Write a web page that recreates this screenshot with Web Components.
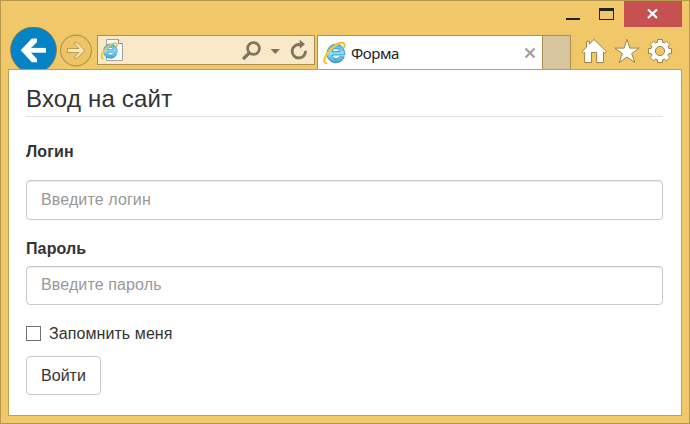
<!DOCTYPE html>
<html lang="ru">
<head>
<meta charset="utf-8">
<title>Форма</title>
<style>
body { margin: 0; font-family: "Liberation Sans", Arial, sans-serif; color: #333; }
</style>
</head>
<body>
<browser-window>
  <title-bar slot="title"></title-bar>
  <tool-bar slot="tools">
    <address-bar slot="address"></address-bar>
    <browser-tab slot="tab">Форма</browser-tab>
  </tool-bar>
  <login-form>
    <span slot="heading">Вход на сайт</span>
    <text-field class="login" hint="Введите логин">Логин</text-field>
    <text-field class="password" hint="Введите пароль">Пароль</text-field>
    <check-field>Запомнить меня</check-field>
    <form-button>Войти</form-button>
  </login-form>
</browser-window>

<script>
const define = (name, html) => {
  const template = document.createElement('template');
  template.innerHTML = html;
  customElements.define(name, class extends HTMLElement {
    constructor() {
      super();
      this.attachShadow({ mode: 'open' }).append(template.content.cloneNode(true));
    }
    connectedCallback() {
      const hint = this.shadowRoot.querySelector('[data-hint]');
      if (hint) hint.textContent = this.getAttribute('hint');
    }
  });
};

const eLogo = `
  <defs><linearGradient id="g" x1="0" y1="0" x2="0" y2="1"><stop offset="0" stop-color="#4fb0e2"/><stop offset=".5" stop-color="#86e0fb"/><stop offset="1" stop-color="#3aa5de"/></linearGradient></defs>
  <path d="M21.300 15.800C19.900 19.400 16.800 21.700 13 21.700C7.700 21.700 4 17.800 4 12.700C4 7.300 7.900 3.300 13 3.300C18.500 3.300 21.900 7.400 21.700 14H9.300C9.600 18.200 14.900 18.700 16.300 15.800ZM9.400 10.600H16.500C16.100 6.600 9.900 6.600 9.400 10.600Z" fill="url(#g)" stroke="#2584bd" stroke-width=".8" fill-rule="evenodd"/>
  <path d="M3.300 22.300C-1.700 21.700 3.500 10.500 11.500 4.900C17.500 .8 23 .4 21.200 6.300" fill="none" stroke="#f8bd22" stroke-width="2" stroke-linecap="round"/>
  <path d="M2.600 18.500C3.800 13 9 7 15 3.400" fill="none" stroke="#ffe27c" stroke-width=".6"/>`;

define('browser-window', `
<style>
:host { display: flex; flex-direction: column; box-sizing: border-box; width: 690px; height: 424px; border: 1px solid #b5984e; background: #f0c869; }
main { flex: 1; margin: 0 7px 7px; border: 1px solid #bd9f52; background: #fff; box-sizing: border-box; }
</style>
<slot name="title"></slot><slot name="tools"></slot><main><slot></slot></main>`);

define('title-bar', `
<style>
:host { display: flex; justify-content: flex-end; height: 26px; padding-right: 7px; }
svg { display: block; }
</style>
<svg width="117" height="26" viewBox="565 1 117 26" shape-rendering="crispEdges">
  <path d="M566 18h14v2h-14z" fill="#222"/>
  <path d="M599 8h15v12h-15zM600 11v8h13v-8z" fill="#222" fill-rule="evenodd"/>
  <path d="M624 1h58v26h-58z" fill="#c75050"/>
  <path d="M648 9.500l9 8.500M657 9.500l-9 8.500" stroke="#fff" stroke-width="2.300" shape-rendering="auto"/>
</svg>`);

define('tool-bar', `
<style>
:host { display: flex; height: 42px; padding-left: 8px; }
svg { display: block; flex: none; }
.forward { margin-right: 5px; }
.new { box-sizing: border-box; width: 28px; height: 34px; margin-top: 8px; border: solid #ad914b; border-width: 1px 1px 0 0; background: #d7c69d; }
.icons { margin-left: 8px; }
</style>
<svg width="50" height="42" viewBox="9 27 50 42">
  <circle cx="33.500" cy="50" r="22.900" fill="#0483c7" stroke="#806f3f"  stroke-width=".8"/>
  <path d="M46 50.300H25" stroke="#fff" stroke-width="4.800" fill="none"/>
  <path d="M31.800 38.500H37V42L28.800 50.300L37 58.900V62.300H31.800L20.700 50.300Z" fill="#fff"/>
</svg>
<svg class="forward" width="33" height="42" viewBox="59 27 33 42">
  <circle cx="76" cy="50.500" r="15.400" fill="#edc466" stroke="#b1944c" stroke-width="1.100"/>
  <path d="M67.500 48.500H79L74.300 43.600V42.800H77.300L84.800 50.500L77.300 58.200H74.300V57.300L79 52.500H67.500Z" fill="#fae6b8" stroke="#af944f" stroke-width=".9"/>
</svg>
<slot name="address"></slot>
<slot name="tab"></slot>
<div class="new"></div>
<svg class="icons" width="96" height="42" viewBox="579 27 96 42">
  <g fill="#fff" stroke="#9d8343" stroke-width="1" stroke-linejoin="round">
    <path d="M582 51.800L586.500 47V41.400H589.300V44.200L593.900 39.300L606.500 51.800L604.700 53.200L603.500 52.200V62.500H596.700V52.500H591.500V62.500H584.700V52.200L583.500 53.200Z"/>
    <path d="M627 39.200L629.800 48.100H639.200L631.700 53.500L634.800 62.500L627 57L619.200 62.500L622.300 53.500L614.800 48.100H624.200Z"/>
    <path id="gear"/>
    <circle cx="660" cy="51" r="4.600" fill="#f0c869"/>
  </g>
</svg>`);

define('address-bar', `
<style>
:host { display: flex; align-items: center; box-sizing: border-box; width: 218px; height: 30px; margin: 8px 2px 0 0; border: 1px solid #ad914b; background: #f9e9c8; }
svg { display: block; }
.actions { margin-left: auto; }
</style>
<svg width="28" height="28" viewBox="98 36 28 28">
  <path d="M106.500 39.500H118.500L122.500 43.500V60.500H106.500Z" fill="#fbfbfb" stroke="#a2a2a2"/>
  <path d="M118.500 39.500V43.500H122.500" fill="#fff" stroke="#888"/>
  <g transform="translate(100.500 41.500) scale(.77)">${eLogo}</g>
</svg>
<svg class="actions" width="76" height="28" viewBox="238 36 76 28">
  <g fill="none" stroke="#7c7562">
    <circle cx="253.500" cy="48.500" r="5.900" stroke-width="2.700"/>
    <path d="M249.300 53L243 59.200" stroke-width="3.200"/>
    <path d="M300.500 44.800A6.700 6.700 0 1 0 305.500 50.800" stroke-width="2.900"/>
  </g>
  <path d="M270.500 49H280L275.300 54ZM299.700 39.800L305 44.300L299.700 48.800Z" fill="#7c7562"/>
</svg>`);

define('browser-tab', `
<style>
:host { display: flex; align-items: center; box-sizing: border-box; width: 226px; height: 34px; margin-top: 8px; border: solid #ad914b; border-width: 1px 1px 0 1px; background: #fff; font: 15px/20px "Noto Sans", sans-serif; color: #222; }
svg { display: block; }
.logo { margin: 0 4px 0 5px; }
.label { letter-spacing: -.45px; padding-top: 1px; }
.close { margin: 0 6px 0 auto; }
</style>
<svg class="logo" width="24" height="24" viewBox="0 0 24 24">${eLogo}</svg>
<span class="label"><slot></slot></span>
<svg class="close" width="12" height="12" viewBox="0 0 12 12"><path d="M1.500 1.500L10.500 10.500M10.500 1.500L1.500 10.500" stroke="#a1a1a1" stroke-width="2.300"/></svg>`);

define('login-form', `
<style>
:host { display: flex; flex-direction: column; align-items: stretch; padding: 10px 18px 0 17px; }
h1 { margin: 0 0 26px; height: 36px; border-bottom: 1px solid #e3e3e3; font: 24px/38px "Liberation Sans", Arial, sans-serif; letter-spacing: .2px; }
::slotted(.login) { --gap: 19px; --height: 40px; margin-bottom: 20px; }
::slotted(.password) { --gap: 8px; --height: 39px; margin-bottom: 19px; }
</style>
<h1><slot name="heading"></slot></h1><slot></slot>`);

define('text-field', `
<style>
:host { display: block; font-size: 16px; letter-spacing: .12px; }
.label { display: block; font-weight: bold; line-height: 18px; margin-bottom: var(--gap); }
.box { display: flex; align-items: center; box-sizing: border-box; height: var(--height); padding: 0 14px; border: 1px solid #c8c8c8; border-radius: 4px; box-shadow: inset 0 1px 1px rgba(0,0,0,.075); color: #999; line-height: 20px; }
.box span { padding-bottom: 1px; }
</style>
<span class="label"><slot></slot></span>
<div class="box"><span data-hint></span></div>`);

define('check-field', `
<style>
:host { display: flex; align-items: center; gap: 8px; height: 19px; margin-bottom: 12px; font-size: 16px; line-height: 19px; letter-spacing: .08px; }
i { box-sizing: border-box; width: 15px; height: 15px; border: 1px solid #707070; background: #fff; }
</style>
<i></i><span><slot></slot></span>`);

define('form-button', `
<style>
:host { display: flex; align-items: center; justify-content: center; align-self: flex-start; box-sizing: border-box; width: 75px; height: 39px; border: 1px solid #c8c8c8; border-radius: 4px; font-size: 16px; line-height: 20px; margin-top: 1px; }
</style>
<slot></slot>`);

/* Eight-toothed settings wheel centred on the last toolbar icon. */
const teeth = [];
for (let k = 0; k < 8; k++) {
  for (const [offset, radius] of [[-16, 9.2], [-12, 11.8], [12, 11.8], [16, 9.2]]) {
    const angle = (k * 45 + offset) * Math.PI / 180;
    teeth.push((660 + radius * Math.cos(angle)).toFixed(2) + ' ' + (51 + radius * Math.sin(angle)).toFixed(2));
  }
}
document.querySelector('tool-bar').shadowRoot.getElementById('gear').setAttribute('d', 'M' + teeth.join('L') + 'Z');
</script>
</body>
</html>
